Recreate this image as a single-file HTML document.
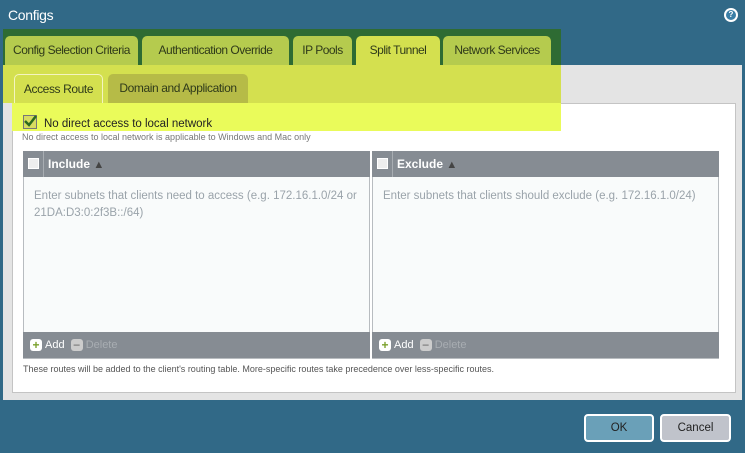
<!DOCTYPE html>
<html><head><style>
*{margin:0;padding:0;box-sizing:border-box}
body{width:745px;height:453px;background:#316987;font-family:"Liberation Sans",sans-serif;position:relative;overflow:hidden;font-size:12px}
.a{position:absolute}
.tab{position:absolute;top:36px;height:29px;background:#b5cb4e;border-radius:5px 5px 0 0;color:#2f3a1a;font-size:12px;line-height:29px;text-align:center;letter-spacing:-0.5px}
.th{position:absolute;height:26px;background:#868c93;color:#fff;font-weight:bold;font-size:12px;line-height:26px}
.tf{position:absolute;height:26px;background:#868c93;color:#fff;font-size:11px;line-height:26px}
.cb{position:absolute;width:11px;height:11px;background:#eee;border:1px solid #fff;top:7px;left:5px}
.ph{position:absolute;color:#9aa3aa;font-size:11.5px;line-height:17px}
.ic{display:inline-block;width:12px;height:12px;border-radius:3px;vertical-align:middle;text-align:center;line-height:12px;font-weight:bold;font-size:12px;margin-right:3px}
</style></head><body>
<div class="a" style="left:8px;top:7px;color:#fff;font-size:14px;letter-spacing:-0.3px">Configs</div>
<div class="a" style="left:724px;top:8px;width:14px;height:14px;border-radius:50%;background:#fff;"><div style="position:absolute;left:2px;top:2px;width:10px;height:10px;border-radius:50%;background:#3a7ea6;color:#fff;font-size:8px;line-height:10px;text-align:center;font-weight:bold">?</div></div>
<div class="a" style="left:3px;top:65px;width:739px;height:335px;background:#e4e4e4"></div>
<div class="a" style="left:3px;top:29px;width:558px;height:36px;background:#2e6b33"></div>
<div class="tab" style="left:5px;width:133px">Config Selection Criteria</div>
<div class="tab" style="left:142px;width:147px">Authentication Override</div>
<div class="tab" style="left:293px;width:59px">IP Pools</div>
<div class="tab" style="left:356px;width:84px;background:#d4e04f;height:30px">Split Tunnel</div>
<div class="tab" style="left:443px;width:108px">Network Services</div>
<div class="a" style="left:3px;top:65px;width:558px;height:38px;background:#d4e04f"></div>
<div class="a" style="left:12px;top:103px;width:724px;height:290px;background:#fff;border:1px solid #c4c4c4"></div>
<div class="a" style="left:14px;top:74px;width:89px;height:30px;background:#d4e04f;border-radius:5px 5px 0 0;border:1px solid #f4f4c0;border-bottom:none;font-size:12px;line-height:28px;text-align:center;color:#2f3a1a;letter-spacing:-0.4px">Access Route</div>
<div class="a" style="left:108px;top:74px;width:140px;height:29px;background:#b6bb47;border-radius:5px 5px 0 0;font-size:12px;line-height:29px;text-align:center;color:#2f3a1a;letter-spacing:-0.4px">Domain and Application</div>
<div class="a" style="left:12px;top:103px;width:549px;height:28px;background:#eafb5a"></div>
<div class="a" style="left:23px;top:115px;width:14px;height:14px;background:#d8dc60;border:1px solid #777"><svg width="14" height="14" style="position:absolute;left:-1px;top:-2px"><path d="M2 7 L6 11 L13 2" stroke="#2c6b1e" stroke-width="2.5" fill="none"/></svg></div>
<div class="a" style="left:44px;top:118px;font-size:11.5px;color:#222">No direct access to local network</div>
<div class="a" style="left:22px;top:132px;font-size:9px;color:#777">No direct access to local network is applicable to Windows and Mac only</div>

<div class="a" style="left:23px;top:151px;width:347px;height:208px;background:#f9fbfb;border:1px solid #b8bcc0"></div>
<div class="th" style="left:23px;top:151px;width:347px"><div class="cb"></div><div style="position:absolute;left:20px;top:0;width:1px;height:26px;background:#a8adb2"></div><span style="position:absolute;left:25px">Include <span style="color:#444;font-size:11px">▲</span></span></div>
<div class="ph" style="left:34px;top:188px">Enter subnets that clients need to access (e.g. 172.16.1.0/24 or<br>21DA:D3:0:2f3B::/64)</div>
<div class="tf" style="left:23px;top:332px;width:347px;padding-left:7px"><span class="ic" style="background:#fff;color:#7ba12d">+</span>Add &nbsp;<span class="ic" style="background:#ccc;color:#888">−</span><span style="color:#a8adb2">Delete</span></div>

<div class="a" style="left:372px;top:151px;width:347px;height:208px;background:#f9fbfb;border:1px solid #b8bcc0"></div>
<div class="th" style="left:372px;top:151px;width:347px"><div class="cb"></div><div style="position:absolute;left:20px;top:0;width:1px;height:26px;background:#a8adb2"></div><span style="position:absolute;left:25px">Exclude <span style="color:#444;font-size:11px">▲</span></span></div>
<div class="ph" style="left:383px;top:188px">Enter subnets that clients should exclude (e.g. 172.16.1.0/24)</div>
<div class="tf" style="left:372px;top:332px;width:347px;padding-left:7px"><span class="ic" style="background:#fff;color:#7ba12d">+</span>Add &nbsp;<span class="ic" style="background:#ccc;color:#888">−</span><span style="color:#a8adb2">Delete</span></div>

<div class="a" style="left:23px;top:364px;font-size:9px;color:#555">These routes will be added to the client's routing table. More-specific routes take precedence over less-specific routes.</div>

<div class="a" style="left:584px;top:414px;width:70px;height:28px;background:#6aa0b8;border:2px solid #fff;border-radius:4px;text-align:center;line-height:24px;color:#222;font-size:11.5px">OK</div>
<div class="a" style="left:660px;top:414px;width:71px;height:28px;background:#c0c3cb;border:2px solid #fff;border-radius:4px;text-align:center;line-height:24px;color:#222;font-size:11.5px">Cancel</div>
</body></html>
